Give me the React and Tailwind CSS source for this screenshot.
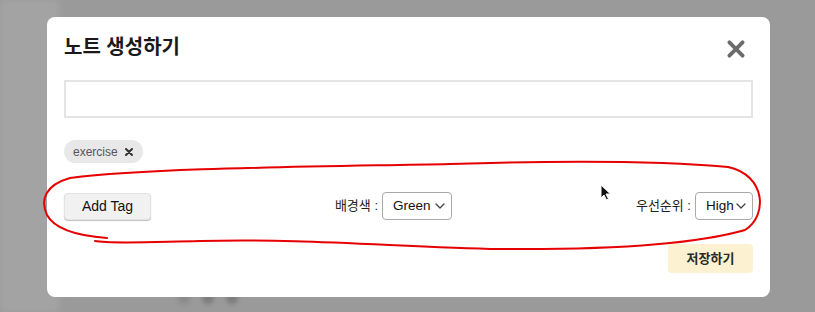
function CloseIcon({ className, strokeWidth = 3.5 }) {
  return (
    <svg viewBox="0 0 20 20" className={className} fill="none" stroke="currentColor" strokeWidth={strokeWidth} strokeLinecap="round">
      <path d="M4 4 L16 16 M16 4 L4 16" />
    </svg>
  );
}

function FakeSelect({ value, width }) {
  return (
    <div className={`flex items-center justify-between h-[28px] ${width} pl-[10px] pr-[6px] border border-[#a9a9a9] rounded-[4px] bg-white text-[13.5px] text-[#111]`}>
      <span>{value}</span>
      <svg width="10" height="6" viewBox="0 0 10 6" fill="none" stroke="#444" strokeWidth="1.3" strokeLinecap="round" strokeLinejoin="round">
        <path d="M1 1 L5 5 L9 1" />
      </svg>
    </div>
  );
}

export default function App() {
  return (
    <div
      className="relative w-[815px] h-[312px] overflow-hidden bg-[#9a9a9a] pl-[47px] pt-[17px]"
      style={{ fontFamily: '"Liberation Sans", "Noto Sans CJK KR", sans-serif' }}
    >
      {/* blurred page behind the dialog */}
      <div className="absolute left-0 top-0 w-[60px] h-[312px] bg-[#a3a3a3] blur-[3px]" />
      <div className="absolute left-[178px] top-[292px] flex gap-[12px] blur-[2px]">
        <span className="size-[12px] rounded-full bg-[#8a8a8a]" />
        <span className="size-[12px] rounded-full bg-[#7c7c7c]" />
        <span className="size-[12px] rounded-full bg-[#7c7c7c]" />
      </div>

      <div className="relative w-[723px] h-[280px] bg-white rounded-[8px] px-[17px] pt-[16px] pb-[23px] flex flex-col">
        <div className="flex items-center justify-between">
          <h2 className="text-[20px] leading-[28px] font-semibold text-[#1a1a1a]">노트 생성하기</h2>
          <CloseIcon className="size-[22px] mr-[6px] mt-[4px] text-[#6b6b6b]" />
        </div>

        <input className="mt-[19px] h-[38px] w-full border-2 border-[#e4e4e4] outline-none" />

        <div className="mt-[22px] flex">
          <span className="flex items-center gap-[6px] h-[23px] pl-[9px] pr-[9px] rounded-full bg-[#e8e8e8] text-[12px] text-[#555]">
            exercise
            <CloseIcon className="size-[10px] text-[#333]" strokeWidth={4} />
          </span>
        </div>

        <div className="mt-[29px] flex items-center justify-between">
          <button className="h-[27px] w-[87px] rounded-[4px] bg-[#f1f1f1] border border-[#e2e2e2] shadow-[0_1px_1px_rgba(0,0,0,0.25)] text-[14px] text-[#111]">
            Add Tag
          </button>
          <div className="flex items-center gap-[4px] text-[13px] text-[#222]">
            <span>배경색 :</span>
            <FakeSelect value="Green" width="w-[70px]" />
          </div>
          <div className="flex items-center gap-[4px] text-[13px] text-[#222]">
            <span>우선순위 :</span>
            <FakeSelect value="High" width="w-[58px]" />
          </div>
        </div>

        <div className="mt-[24px] flex justify-end">
          <button className="h-[29px] w-[85px] rounded-[4px] bg-[#fcf1d0] text-[13px] font-semibold text-[#2a2a2a]">
            저장하기
          </button>
        </div>
      </div>

      {/* red hand-drawn annotation */}
      <svg className="absolute left-0 top-0 pointer-events-none" width="815" height="312" fill="none">
        <path
          d="M107 238 C80 236 55 230 47 215 C40 200 45 185 70 178 C150 168 300 167 450 164 C550 161 650 160 728 167 C766 175 768 216 745 230 C700 243 620 250 500 249 C400 247 300 238 200 241 C150 242 110 244 95 241"
          stroke="#e60000"
          strokeWidth="2"
          strokeLinecap="round"
        />
      </svg>

      {/* mouse cursor */}
      <svg className="absolute left-[600px] top-[184px]" width="12" height="17" viewBox="0 0 12 17">
        <path d="M1 1 L1 14 L4 11 L6.5 16 L8.5 15 L6 10 L10.5 10 Z" fill="#111" stroke="#fff" strokeWidth="1" />
      </svg>
    </div>
  );
}
